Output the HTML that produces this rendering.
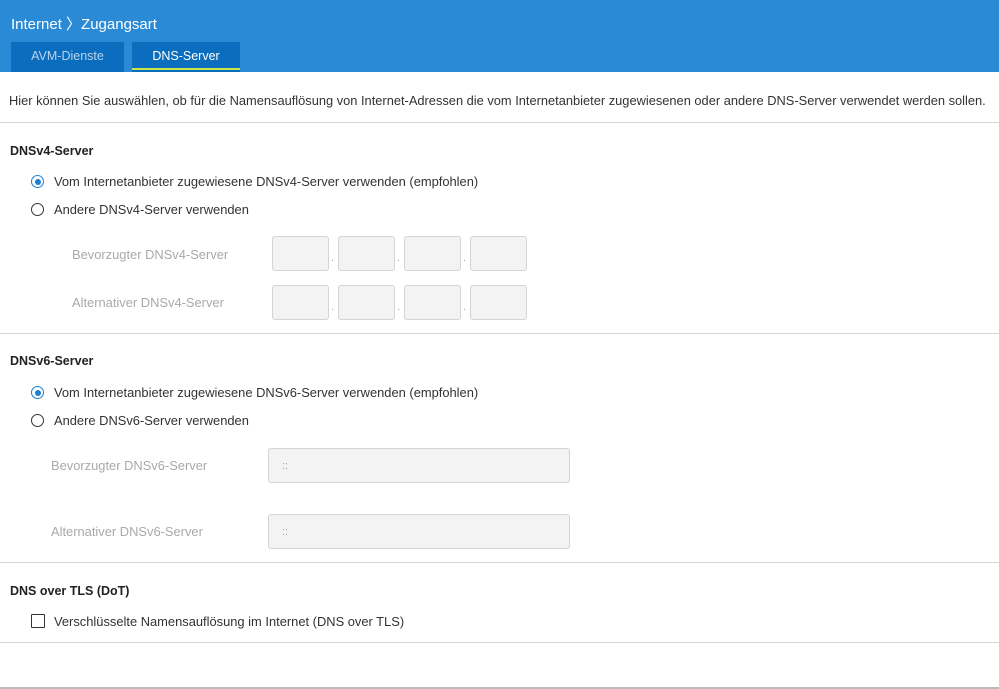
<!DOCTYPE html><html><head><style>
body{margin:0;width:999px;height:689px;background:#fff;font-family:"Liberation Sans",sans-serif;font-size:12.9px;color:#333;position:relative;overflow:hidden}
.a{position:absolute;white-space:nowrap}
.hd{position:absolute;left:0;top:0;width:999px;height:72px;background:#2b8ad6}
.tab{position:absolute;top:42px;height:30px;background:#0b6dbd;color:#fff;text-align:center;line-height:28px;font-size:12.5px}
.ln{position:absolute;left:0;width:999px;height:1px;background:#d6d6d6}
.b{font-weight:bold;font-size:12.5px;color:#222}
.r{position:absolute;width:11px;height:11px;border:1.5px solid #333;border-radius:50%}
.r.on{border-color:#1c7fd0}
.r.on:after{content:"";position:absolute;left:2.5px;top:2.5px;width:6px;height:6px;border-radius:50%;background:#1c7fd0}
.in{position:absolute;background:#f3f3f3;border:1px solid #d4d4d4;border-radius:3px}
.g{color:#a9a9a9}
.dot{position:absolute;color:#aaa;font-size:11px}
</style></head><body>
<div class="hd"></div>
<div class="a" style="left:11px;top:13px;color:#fff;font-size:15px">Internet 〉Zugangsart</div>
<div class="tab" style="left:11px;width:113px;color:#b9d4ee">AVM-Dienste</div>
<div class="tab" style="left:132px;width:108px">DNS-Server</div>
<div style="position:absolute;left:132px;top:68px;width:108px;height:2px;background:#c9e34a"></div>
<div class="a" style="left:9px;top:93px;font-size:12.85px">Hier können Sie auswählen, ob für die Namensauflösung von Internet-Adressen die vom Internetanbieter zugewiesenen oder andere DNS-Server verwendet werden sollen.</div>
<div class="ln" style="top:122px"></div>
<div class="a b" style="left:10px;top:144px">DNSv4-Server</div>
<div class="r on" style="left:31px;top:175px"></div><div class="a" style="left:54px;top:174px">Vom Internetanbieter zugewiesene DNSv4-Server verwenden (empfohlen)</div>
<div class="r" style="left:31px;top:203px"></div><div class="a" style="left:54px;top:202px">Andere DNSv4-Server verwenden</div>
<div class="a g" style="left:72px;top:247px">Bevorzugter DNSv4-Server</div>
<div class="a g" style="left:72px;top:295px">Alternativer DNSv4-Server</div>
<div class="in" style="left:272px;top:236px;width:55px;height:33px"></div><div class="in" style="left:338px;top:236px;width:55px;height:33px"></div><div class="in" style="left:404px;top:236px;width:55px;height:33px"></div><div class="in" style="left:470px;top:236px;width:55px;height:33px"></div>
<div class="in" style="left:272px;top:285px;width:55px;height:33px"></div><div class="in" style="left:338px;top:285px;width:55px;height:33px"></div><div class="in" style="left:404px;top:285px;width:55px;height:33px"></div><div class="in" style="left:470px;top:285px;width:55px;height:33px"></div>
<div class="dot" style="left:331px;top:252px">.</div><div class="dot" style="left:397px;top:252px">.</div><div class="dot" style="left:463px;top:252px">.</div>
<div class="dot" style="left:331px;top:301px">.</div><div class="dot" style="left:397px;top:301px">.</div><div class="dot" style="left:463px;top:301px">.</div>
<div class="ln" style="top:333px"></div>
<div class="a b" style="left:10px;top:354px">DNSv6-Server</div>
<div class="r on" style="left:31px;top:386px"></div><div class="a" style="left:54px;top:385px">Vom Internetanbieter zugewiesene DNSv6-Server verwenden (empfohlen)</div>
<div class="r" style="left:31px;top:414px"></div><div class="a" style="left:54px;top:413px">Andere DNSv6-Server verwenden</div>
<div class="a g" style="left:51px;top:458px">Bevorzugter DNSv6-Server</div>
<div class="a g" style="left:51px;top:524px">Alternativer DNSv6-Server</div>
<div class="in" style="left:268px;top:448px;width:300px;height:33px"></div><div class="a g" style="left:282px;top:460px;font-size:11px">::</div>
<div class="in" style="left:268px;top:514px;width:300px;height:33px"></div><div class="a g" style="left:282px;top:526px;font-size:11px">::</div>
<div class="ln" style="top:562px"></div>
<div class="a b" style="left:10px;top:584px">DNS over TLS (DoT)</div>
<div style="position:absolute;left:31px;top:614px;width:12px;height:12px;border:1.5px solid #333;border-radius:1px"></div>
<div class="a" style="left:54px;top:614px">Verschlüsselte Namensauflösung im Internet (DNS over TLS)</div>
<div class="ln" style="top:642px"></div>
<div class="ln" style="top:687px;height:2px;background:#bbb"></div>
</body></html>
